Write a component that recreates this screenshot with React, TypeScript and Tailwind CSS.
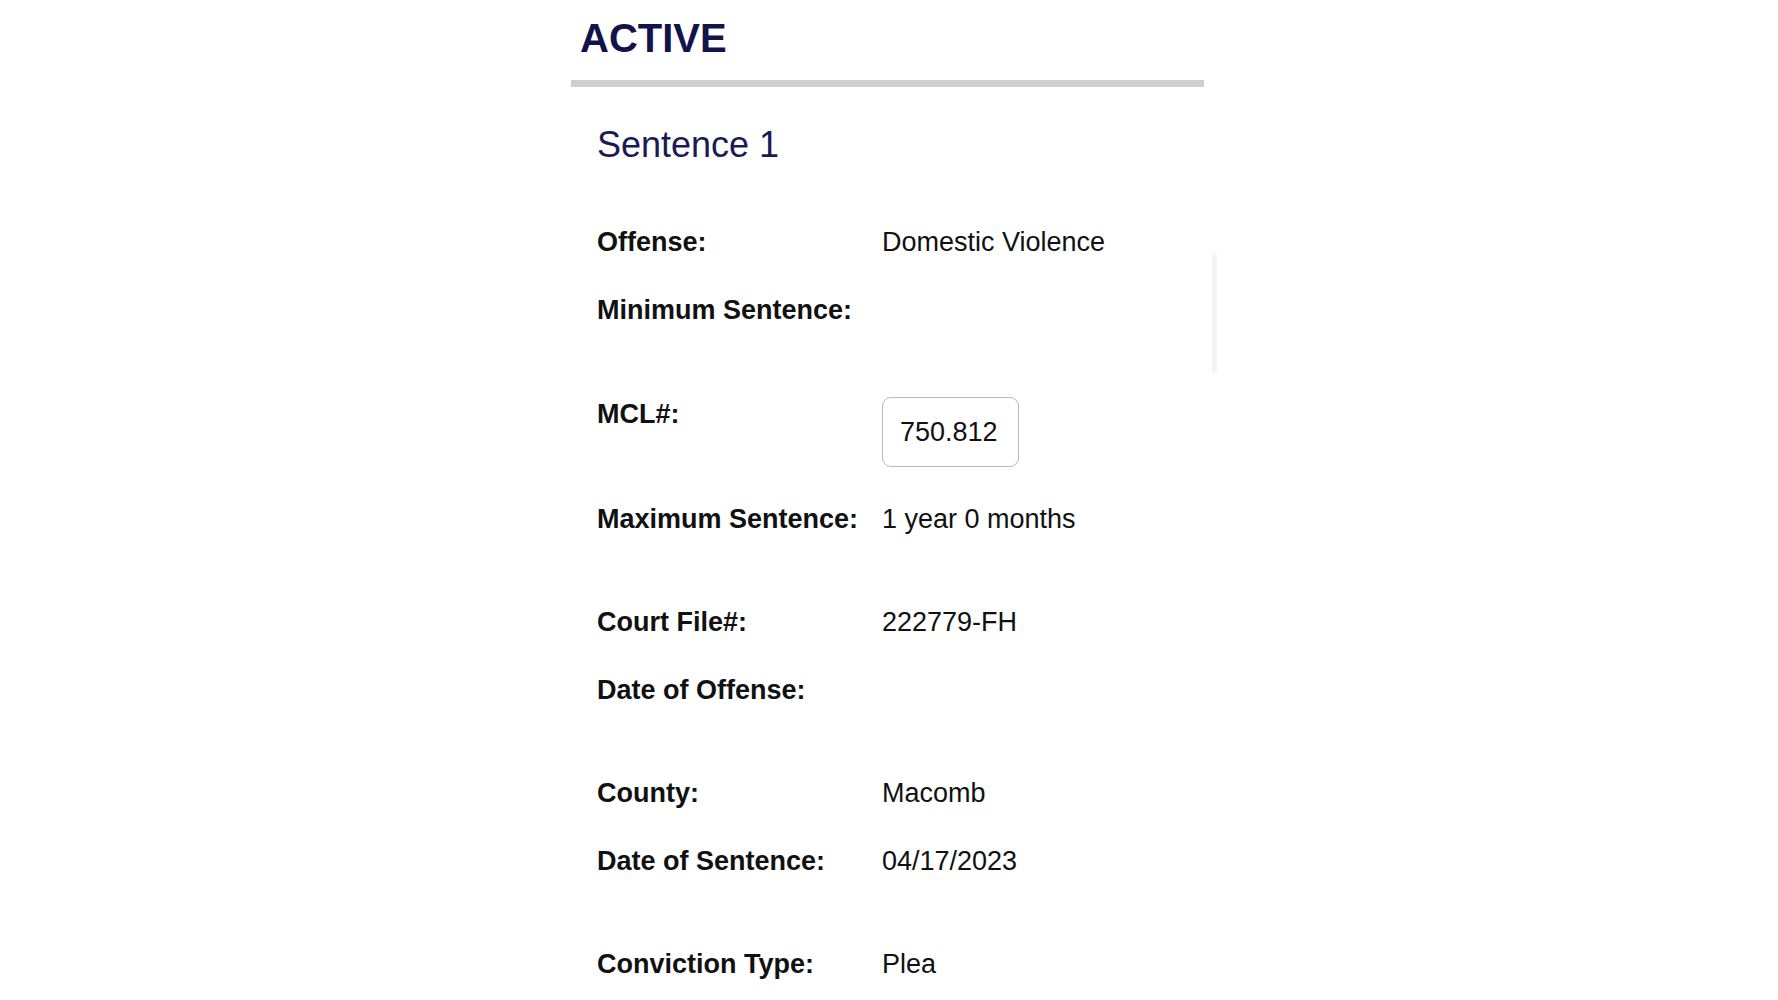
const rows: { label: string; value?: string; box?: boolean; mt: string }[] = [
  { label: 'Offense:', value: 'Domestic Violence', mt: 'mt-[61px]' },
  { label: 'Minimum Sentence:', mt: 'mt-[38px]' },
  { label: 'MCL#:', value: '750.812', box: true, mt: 'mt-[72px]' },
  { label: 'Maximum Sentence:', value: '1 year 0 months', mt: 'mt-[37px]' },
  { label: 'Court File#:', value: '222779-FH', mt: 'mt-[73px]' },
  { label: 'Date of Offense:', mt: 'mt-[38px]' },
  { label: 'County:', value: 'Macomb', mt: 'mt-[73px]' },
  { label: 'Date of Sentence:', value: '04/17/2023', mt: 'mt-[38px]' },
  { label: 'Conviction Type:', value: 'Plea', mt: 'mt-[73px]' },
];

export default function App() {
  return (
    <div className="relative h-[1000px] overflow-hidden bg-white font-['Liberation_Sans',Arial,sans-serif]">
      {/* faint scroll thumb on the right */}
      <div className="absolute left-[1212px] top-[253px] h-[120px] w-[5px] rounded-full bg-[#f4f4f4]" />

      <div className="ml-[571px] w-[633px]">
        <h1 className="pt-[16px] pl-[9px] text-[40px] leading-[44px] font-bold text-[#14124a]">ACTIVE</h1>
        <div className="mt-[20px] h-[7px] bg-[#cfcfcf]" />

        <h2 className="mt-[38px] pl-[26px] text-[36px] leading-[40px] text-[#1a1a55]">Sentence 1</h2>

        <div className="flex flex-col pl-[26px] pt-[1px]">
          {rows.map((r) => (
            <div key={r.label} className={`flex items-start ${r.mt}`}>
              <div
                className={`w-[285px] shrink-0 text-[27px] leading-[30px] font-bold text-[#111] ${
                  r.box ? 'pt-[2px]' : ''
                }`}
              >
                {r.label}
              </div>
              {r.box ? (
                <div className="flex h-[70px] w-[137px] items-center rounded-[9px] border border-[#b9b9b9] pl-[17px] text-[27px] leading-[30px] text-[#111]">
                  {r.value}
                </div>
              ) : (
                <div className="text-[27px] leading-[30px] text-[#111]">{r.value ?? ''}</div>
              )}
            </div>
          ))}
        </div>
      </div>
    </div>
  );
}
